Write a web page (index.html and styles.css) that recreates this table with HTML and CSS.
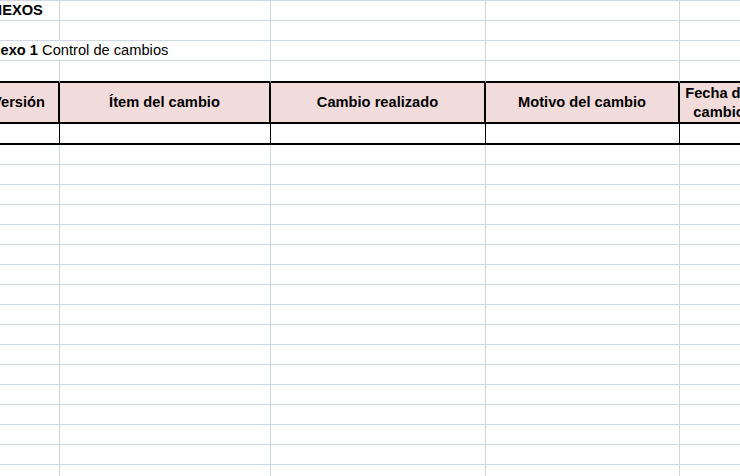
FILE: index.html
```html
<!DOCTYPE html>
<html lang="es">
<head>
<meta charset="utf-8">
<title>Anexos</title>
<link rel="stylesheet" href="styles.css">
</head>
<body>
<div class="sheet">
  <div class="row">
    <div class="cell a text bold">ANEXOS</div><div class="cell b"></div><div class="cell c"></div><div class="cell d"></div><div class="cell e"></div><div class="cell f"></div>
  </div>
  <div class="row">
    <div class="cell a"></div><div class="cell b"></div><div class="cell c"></div><div class="cell d"></div><div class="cell e"></div><div class="cell f"></div>
  </div>
  <div class="row">
    <div class="cell ab text"><b>Anexo 1</b> Control de cambios</div><div class="cell c"></div><div class="cell d"></div><div class="cell e"></div><div class="cell f"></div>
  </div>
  <div class="row row-above">
    <div class="cell a"></div><div class="cell b"></div><div class="cell c"></div><div class="cell d"></div><div class="cell e"></div><div class="cell f"></div>
  </div>
  <div class="row row-head">
    <div class="cell a head">Versión</div><div class="cell b head">Ítem del cambio</div><div class="cell c head">Cambio realizado</div><div class="cell d head">Motivo del cambio</div><div class="cell e head">Fecha del cambio</div><div class="cell f"></div>
  </div>
  <div class="row row-data">
    <div class="cell a data"></div><div class="cell b data"></div><div class="cell c data"></div><div class="cell d data"></div><div class="cell e data"></div><div class="cell f"></div>
  </div>
  <div class="row"><div class="cell a"></div><div class="cell b"></div><div class="cell c"></div><div class="cell d"></div><div class="cell e"></div><div class="cell f"></div></div>
  <div class="row"><div class="cell a"></div><div class="cell b"></div><div class="cell c"></div><div class="cell d"></div><div class="cell e"></div><div class="cell f"></div></div>
  <div class="row"><div class="cell a"></div><div class="cell b"></div><div class="cell c"></div><div class="cell d"></div><div class="cell e"></div><div class="cell f"></div></div>
  <div class="row"><div class="cell a"></div><div class="cell b"></div><div class="cell c"></div><div class="cell d"></div><div class="cell e"></div><div class="cell f"></div></div>
  <div class="row"><div class="cell a"></div><div class="cell b"></div><div class="cell c"></div><div class="cell d"></div><div class="cell e"></div><div class="cell f"></div></div>
  <div class="row"><div class="cell a"></div><div class="cell b"></div><div class="cell c"></div><div class="cell d"></div><div class="cell e"></div><div class="cell f"></div></div>
  <div class="row"><div class="cell a"></div><div class="cell b"></div><div class="cell c"></div><div class="cell d"></div><div class="cell e"></div><div class="cell f"></div></div>
  <div class="row"><div class="cell a"></div><div class="cell b"></div><div class="cell c"></div><div class="cell d"></div><div class="cell e"></div><div class="cell f"></div></div>
  <div class="row"><div class="cell a"></div><div class="cell b"></div><div class="cell c"></div><div class="cell d"></div><div class="cell e"></div><div class="cell f"></div></div>
  <div class="row"><div class="cell a"></div><div class="cell b"></div><div class="cell c"></div><div class="cell d"></div><div class="cell e"></div><div class="cell f"></div></div>
  <div class="row"><div class="cell a"></div><div class="cell b"></div><div class="cell c"></div><div class="cell d"></div><div class="cell e"></div><div class="cell f"></div></div>
  <div class="row"><div class="cell a"></div><div class="cell b"></div><div class="cell c"></div><div class="cell d"></div><div class="cell e"></div><div class="cell f"></div></div>
  <div class="row"><div class="cell a"></div><div class="cell b"></div><div class="cell c"></div><div class="cell d"></div><div class="cell e"></div><div class="cell f"></div></div>
  <div class="row"><div class="cell a"></div><div class="cell b"></div><div class="cell c"></div><div class="cell d"></div><div class="cell e"></div><div class="cell f"></div></div>
  <div class="row"><div class="cell a"></div><div class="cell b"></div><div class="cell c"></div><div class="cell d"></div><div class="cell e"></div><div class="cell f"></div></div>
  <div class="row"><div class="cell a"></div><div class="cell b"></div><div class="cell c"></div><div class="cell d"></div><div class="cell e"></div><div class="cell f"></div></div>
  <div class="row"><div class="cell a"></div><div class="cell b"></div><div class="cell c"></div><div class="cell d"></div><div class="cell e"></div><div class="cell f"></div></div>
</div>
</body>
</html>
```
FILE: styles.css
```css
html, body {
  margin: 0;
  padding: 0;
  background: #ffffff;
  overflow: hidden;
}

body {
  width: 740px;
  height: 476px;
  font-family: "Liberation Sans", Arial, sans-serif;
  font-size: 14.67px;
  color: #000000;
}

.sheet {
  margin-left: -21px;
  width: 900px;
  border-top: 1px solid #d0d7e5;
}

.row {
  display: flex;
  height: 20px;
}

.cell {
  flex: none;
  box-sizing: border-box;
  height: 100%;
  border-right: 1px solid #d0d7e5;
  border-bottom: 1px solid #d0d7e5;
}

.a { width: 81px; }
.b { width: 211px; }
.ab { width: 292px; }
.c { width: 215px; }
.d { width: 194px; }
.e { width: 80px; }
.f { width: 119px; }

.text {
  padding-left: 2px;
  line-height: 19px;
  white-space: nowrap;
}

.bold {
  font-weight: bold;
}

.row-above {
  height: 22px;
}

.row-above .cell {
  border-bottom: 2px solid #000000;
}

.row-head {
  height: 41px;
}

.head {
  display: flex;
  align-items: center;
  justify-content: center;
  text-align: center;
  padding: 0 2px;
  font-weight: bold;
  line-height: 19px;
  white-space: nowrap;
  background: #f2dcdb;
  border-right: 2px solid #000000;
  border-bottom: 2px solid #000000;
}

.head.e {
  white-space: normal;
}

.row-head .f {
  border-bottom: 2px solid #000000;
}

.row-data {
  height: 21px;
}

.data {
  background: #ffffff;
  border-right: 1px solid #000000;
  border-bottom: 2px solid #000000;
}

.row-data .f {
  border-bottom: 2px solid #000000;
}
```
